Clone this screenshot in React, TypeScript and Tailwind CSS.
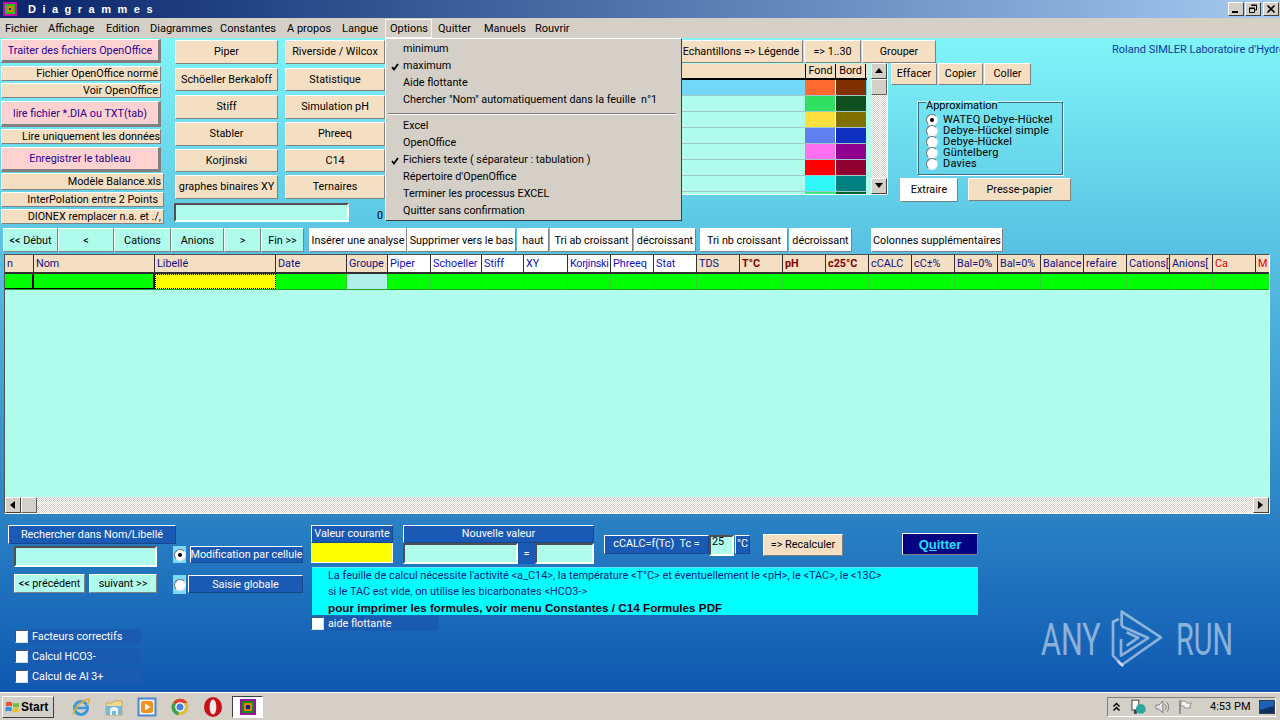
import type { ReactNode } from "react";
import clsx from "clsx";

const BEIGE = "bg-[#f5dfc3] text-black";
const MINT = "bg-[#b0fcec] text-black";
const WHITE = "bg-white text-black";
const PINK = "bg-[#ffd2d2] text-[#2a0090] border-b-[3px] border-r-[3px] pt-[2px]";
const BLUE = "bg-[#1a5ab4] text-white";
const CHECKER = "bg-[repeating-conic-gradient(#d4d0c8_0_25%,#ffffff_0_50%)] bg-[length:2px_2px]";
const ARIAL = "font-['Liberation_Sans',sans-serif]";

function Btn({ className, children }: { className?: string; children?: ReactNode }) {
  return (
    <button
      className={clsx(
        "flex shrink-0 items-center justify-center overflow-hidden whitespace-nowrap border border-t-white border-l-white border-b-[#808080] border-r-[#808080] pt-[1px] leading-none",
        className
      )}
    >
      {children}
    </button>
  );
}

function Field({ className }: { className?: string }) {
  return <div className={clsx("shrink-0 border-2 border-t-[#505050] border-l-[#505050] border-b-white border-r-white bg-[#b0fcec]", className)} />;
}

function Arrow({ dir }: { dir: "up" | "down" | "left" | "right" }) {
  const pts = { up: "4,1 0,6 8,6", down: "0,1 8,1 4,6", left: "6,0 6,8 1,4", right: "1,0 1,8 6,4" }[dir];
  return (
    <svg width="8" height="8" viewBox="0 0 8 8">
      <polygon points={pts} fill="#000" />
    </svg>
  );
}

function ScrollBtn({ dir }: { dir: "up" | "down" | "left" | "right" }) {
  return (
    <div className="flex h-[16px] w-[16px] shrink-0 items-center justify-center border border-t-white border-l-white border-b-[#404040] border-r-[#404040] bg-[#d4d0c8]">
      <Arrow dir={dir} />
    </div>
  );
}

function Radio({ on, className }: { on?: boolean; className?: string }) {
  return (
    <div className={clsx("flex h-[12px] w-[12px] shrink-0 items-center justify-center rounded-full border border-t-[#707070] border-l-[#707070] border-b-[#e8e8e8] border-r-[#e8e8e8] bg-white", className)}>
      {on && <div className="h-[4px] w-[4px] rounded-full bg-black" />}
    </div>
  );
}

function Check({ label, wide }: { label: string; wide: string }) {
  return (
    <div className={clsx("flex h-[15px] items-center", wide)}>
      <div className="h-[13px] w-[13px] shrink-0 border border-t-[#505050] border-l-[#505050] border-b-[#e0e0e0] border-r-[#e0e0e0] bg-white" />
      <div className="flex h-full flex-1 items-center bg-[#1a5ab0] pt-[2px] pl-[4px] text-[10.8px] leading-none whitespace-nowrap text-white">{label}</div>
    </div>
  );
}

function TitleBar() {
  return (
    <div className="flex h-[18px] shrink-0 items-center bg-linear-to-r from-[#0a246a] to-[#a6caf0] pl-[3px]">
      <svg width="14" height="14" viewBox="0 0 14 14" className="shrink-0">
        <rect width="14" height="14" fill="#c010a0" />
        <rect x="2" y="2" width="10" height="10" fill="#20c020" />
        <rect x="4" y="4" width="6" height="6" fill="#e08000" />
        <rect x="6" y="6" width="2" height="2" fill="#102080" />
      </svg>
      <span className={clsx("ml-[11px] text-[11px] leading-none font-bold tracking-[6.5px] whitespace-nowrap text-white", ARIAL)}>Diagrammes</span>
      <div className="ml-auto mr-[1px] flex gap-[1px]">
        {["min", "max", "close"].map((k) => (
          <div key={k} className={clsx("flex h-[14px] w-[16px] items-center justify-center border border-t-white border-l-white border-b-[#404040] border-r-[#404040] bg-[#d4d0c8]", k === "close" && "ml-[1px]")}>
            <svg width="10" height="10" viewBox="0 0 10 10">
              {k === "min" && <rect x="1" y="7" width="6" height="2" fill="#000" />}
              {k === "max" && <path d="M3.5 1.5h5v4.5h-2M3 1h6M1.5 4.5h5v4h-5zM1 4h6" fill="none" stroke="#000" />}
              {k === "close" && <path d="M1.5 1.5l7 7M8.5 1.5l-7 7" stroke="#000" strokeWidth="1.6" />}
            </svg>
          </div>
        ))}
      </div>
    </div>
  );
}

const menus = [
  { t: "Fichier", w: "w-[43px] pl-[5px]" },
  { t: "Affichage", w: "w-[58px] pl-[5px]" },
  { t: "Edition", w: "w-[44px] pl-[5px]" },
  { t: "Diagrammes", w: "w-[70px] pl-[5px]" },
  { t: "Constantes", w: "w-[67px] pl-[5px]" },
  { t: "A propos", w: "w-[55px] pl-[5px]" },
  { t: "Langue", w: "w-[48px] pl-[5px]" },
];
const menus2 = [
  { t: "Quitter", w: "w-[46px] pl-[6px]" },
  { t: "Manuels", w: "w-[51px] pl-[6px]" },
  { t: "Rouvrir", w: "w-[50px] pl-[6px]" },
];

const optionsTop = ["minimum", "maximum", "Aide flottante", 'Chercher "Nom" automatiquement dans la feuille  n°1'];
const optionsBottom = ["Excel", "OpenOffice", "Fichiers texte ( séparateur : tabulation )", "Répertoire d'OpenOffice", "Terminer les processus EXCEL", "Quitter sans confirmation"];

function OptionItem({ label, checked }: { label: string; checked: boolean }) {
  return (
    <div className="flex h-[17px] items-center whitespace-pre text-[10.8px] leading-none text-black">
      <div className="flex w-[17px] justify-center">
        {checked && (
          <svg width="8" height="8" viewBox="0 0 8 8">
            <path d="M1 4l2 2.5L7 1" fill="none" stroke="#000" strokeWidth="1.8" />
          </svg>
        )}
      </div>
      {label}
    </div>
  );
}

function MenuBar() {
  return (
    <div className="relative z-10 flex h-[20px] shrink-0 items-center bg-[#d4d0c8] pt-[1px] text-[11px] leading-none text-black">
      {menus.map((m) => (
        <div key={m.t} className={clsx("whitespace-nowrap", m.w)}>{m.t}</div>
      ))}
      <div className="flex h-[19px] w-[47px] items-center border border-[#f4f4f4] pl-[4px]">Options</div>
      {menus2.map((m) => (
        <div key={m.t} className={clsx("whitespace-nowrap", m.w)}>{m.t}</div>
      ))}
      <div className="absolute top-[20px] left-[385px] h-[183px] w-[297px] border border-t-white border-l-white border-b-[#404040] border-r-[#404040] bg-[#d4d0c8] pt-[2px]">
        {optionsTop.map((o) => (
          <OptionItem key={o} label={o} checked={o === "maximum"} />
        ))}
        <div className="mx-[2px] mt-[4px] mb-[3px] h-[2px] w-[288px] border-t border-t-[#808080] border-b border-b-white" />
        {optionsBottom.map((o) => (
          <OptionItem key={o} label={o} checked={o.startsWith("Fichiers")} />
        ))}
      </div>
    </div>
  );
}

const leftCol = [
  { t: "Traiter des fichiers OpenOffice", c: clsx(PINK, "mt-[1px] h-[24px] w-[160px]") },
  { t: "Fichier OpenOffice normé", c: clsx(BEIGE, "mt-[3px] h-[15px] w-[160px] justify-end pr-[2px]") },
  { t: "Voir OpenOffice", c: clsx(BEIGE, "mt-[2px] h-[15px] w-[160px] justify-end pr-[2px]") },
  { t: "lire fichier *.DIA ou TXT(tab)", c: clsx(PINK, "mt-[3px] h-[26px] w-[160px]") },
  { t: "Lire uniquement les données", c: clsx(BEIGE, "mt-[2px] h-[15px] w-[160px] justify-end") },
  { t: "Enregistrer le tableau", c: clsx(PINK, "mt-[3px] h-[25px] w-[160px]") },
  { t: "Modèle Balance.xls", c: clsx(BEIGE, "mt-[1px] h-[17px] w-[163px] justify-end pr-[2px]") },
  { t: "InterPolation entre 2 Points", c: clsx(BEIGE, "mt-[2px] h-[15px] w-[163px] justify-end pr-[5px]") },
  { t: "DIONEX remplacer n.a. et ./,", c: clsx(BEIGE, "mt-[2px] h-[15px] w-[163px] justify-end pr-[2px]") },
];

const diagrams = [
  { a: "Piper", b: "Riverside / Wilcox", c: "mt-[2px] h-[24px]" },
  { a: "Schöeller Berkaloff", b: "Statistique", c: "mt-[4px] h-[23px]" },
  { a: "Stiff", b: "Simulation pH", c: "mt-[4px] h-[24px]" },
  { a: "Stabler", b: "Phreeq", c: "mt-[3px] h-[24px]" },
  { a: "Korjinski", b: "C14", c: "mt-[3px] h-[23px]" },
  { a: "graphes binaires XY", b: "Ternaires", c: "mt-[3px] h-[24px]" },
];

const swatches = [
  ["bg-[#ff6a30]", "bg-[#803000]"],
  ["bg-[#30e060]", "bg-[#104f20]"],
  ["bg-[#ffe040]", "bg-[#807000]"],
  ["bg-[#6080f0]", "bg-[#1030c0]"],
  ["bg-[#ff70f0]", "bg-[#900090]"],
  ["bg-[#ff0000]", "bg-[#900030]"],
  ["bg-[#30f8f8]", "bg-[#008080]"],
];

const approximations = ["WATEQ Debye-Hückel", "Debye-Hückel simple", "Debye-Hückel", "Güntelberg", "Davies"];

function ColorTable() {
  return (
    <div className="flex h-[132px] w-[503px] shrink-0 overflow-hidden border-r border-b border-white bg-[#b0fcec]">
      <div className="flex w-[482px] shrink-0 flex-col pt-[1px]">
        <div className="flex h-[16px] shrink-0 border-b-2 border-black bg-[#f5dfc3] pl-[420px] leading-none">
          <div className="flex w-[31px] items-center justify-center border-x border-black">Fond</div>
          <div className="flex w-[30px] items-center justify-center border-r border-black">Bord</div>
        </div>
        {swatches.map(([fond, bord], i) => (
          <div key={fond} className={clsx("flex h-[16px] shrink-0 border-b border-[#a0c8c8] pl-[420px]", i === 0 ? "bg-[#73d8f8]" : "bg-[#b0fcec]")}>
            <div className={clsx("w-[31px] border-r border-white", fond)} />
            <div className={clsx("w-[30px]", bord)} />
          </div>
        ))}
        <div className="flex h-[2px] shrink-0 pl-[420px]">
          <div className="w-[31px] bg-[#40e880]" />
          <div className="w-[30px] bg-[#006030]" />
        </div>
      </div>
      <div className={clsx("ml-[4px] flex w-[16px] shrink-0 flex-col", CHECKER)}>
        <ScrollBtn dir="up" />
        <div className="h-[16px] w-[16px] border border-t-white border-l-white border-b-[#606060] border-r-[#606060] bg-[#d4d0c8]" />
        <div className="flex-1" />
        <ScrollBtn dir="down" />
      </div>
    </div>
  );
}

function TopPanel() {
  return (
    <div className="flex h-[188px] shrink-0 text-[10.8px]">
      <div className="ml-[1px] flex w-[173px] shrink-0 flex-col">
        {leftCol.map((b) => (
          <Btn key={b.t} className={b.c}>{b.t}</Btn>
        ))}
      </div>
      <div className="flex w-[211px] shrink-0 flex-col">
        {diagrams.map((d) => (
          <div key={d.a} className={clsx("flex pl-[1px]", d.c)}>
            <Btn className={clsx(BEIGE, "w-[103px]")}>{d.a}</Btn>
            <Btn className={clsx(BEIGE, "ml-[7px] w-[100px]")}>{d.b}</Btn>
          </div>
        ))}
        <div className="mt-[4px] flex items-end">
          <Field className="h-[19px] w-[175px]" />
          <span className="ml-[28px] leading-none">0</span>
        </div>
      </div>
      <div className="flex w-[695px] shrink-0 flex-col">
        <div className="mt-[2px] flex h-[23px] w-[551px] shrink-0 justify-end">
          <Btn className={clsx(BEIGE, "w-[124px]")}>Echantillons =&gt; Légende</Btn>
          <Btn className={clsx(BEIGE, "ml-[1px] w-[57px]")}>=&gt; 1..30</Btn>
          <Btn className={clsx(BEIGE, "ml-[1px] w-[74px]")}>Grouper</Btn>
        </div>
        <div className="flex">
          <ColorTable />
          <div className="ml-[3px] flex flex-col">
            <div className="flex h-[22px]">
              <Btn className={clsx(BEIGE, "w-[46px]")}>Effacer</Btn>
              <Btn className={clsx(BEIGE, "ml-[1px] w-[45px]")}>Copier</Btn>
              <Btn className={clsx(BEIGE, "ml-[1px] w-[47px]")}>Coller</Btn>
            </div>
            <fieldset className="mt-[12px] ml-[27px] h-[78px] w-[145px] border border-[#3a6a80] pl-[7px] text-[11px] tracking-[0.2px] shadow-[1px_1px_0_#ffffff,-1px_-1px_0_#d8f8f8]">
              <legend className="relative top-[3px] text-[11px] leading-none tracking-normal">Approximation</legend>
              <div className="mt-[6px]">
                {approximations.map((a, i) => (
                  <div key={a} className="flex h-[11px] items-center whitespace-nowrap leading-[11px]">
                    <Radio on={i === 0} />
                    <span className="ml-[5px]">{a}</span>
                  </div>
                ))}
              </div>
            </fieldset>
            <div className="mt-[3px] ml-[9px] flex">
              <Btn className={clsx(WHITE, "h-[24px] w-[58px]")}>Extraire</Btn>
              <Btn className={clsx(BEIGE, "ml-[10px] h-[23px] w-[103px]")}>Presse-papier</Btn>
            </div>
          </div>
        </div>
      </div>
      <div className="ml-[32px] mt-[6px] whitespace-nowrap text-[11px] leading-none text-[#0a3aa0]">Roland SIMLER Laboratoire d'Hydrogéologie</div>
    </div>
  );
}

const navButtons = [
  { t: "<< Début", c: clsx(MINT, "w-[55px]") },
  { t: "<", c: clsx(MINT, "w-[56px]") },
  { t: "Cations", c: clsx(MINT, "w-[57px]") },
  { t: "Anions", c: clsx(MINT, "w-[53px]") },
  { t: ">", c: clsx(MINT, "w-[37px]") },
  { t: "Fin >>", c: clsx(MINT, "w-[43px]") },
  { t: "Insérer une analyse", c: clsx(WHITE, "ml-[5px] w-[98px]") },
  { t: "Supprimer vers le bas", c: clsx(WHITE, "w-[109px]") },
  { t: "haut", c: clsx(WHITE, "ml-[1px] w-[32px]") },
  { t: "Tri ab croissant", c: clsx(WHITE, "ml-[1px] w-[83px]") },
  { t: "décroissant", c: clsx(WHITE, "ml-[1px] w-[62px]") },
  { t: "Tri nb croissant", c: clsx(WHITE, "ml-[4px] w-[88px]") },
  { t: "décroissant", c: clsx(WHITE, "ml-[1px] w-[63px]") },
  { t: "Colonnes supplémentaires", c: clsx(WHITE, "ml-[19px] w-[132px]") },
];

const COLS = "grid grid-cols-[29px_121px_121px_71px_41px_43px_51px_42px_44px_43px_43px_43px_43px_43px_43px_43px_43px_43px_43px_43px_43px_43px_43px_43px_43px_15px]";
const HB = "bg-[#f5dfc3] text-[#101080]";
const HW = "bg-white text-[#1010c0]";
const HM = "bg-[#f5dfc3] text-[#800000] font-bold";
const HR = "bg-[#f5dfc3] text-[#e00000]";

const headers = [
  { t: "n", c: HB },
  { t: "Nom", c: HB },
  { t: "Libellé", c: HB },
  { t: "Date", c: HB },
  { t: "Groupe", c: HB },
  { t: "Piper", c: HW },
  { t: "Schoeller", c: HW },
  { t: "Stiff", c: HW },
  { t: "XY", c: HW },
  { t: "Korjinski", c: clsx(HW, "tracking-[-0.3px]") },
  { t: "Phreeq", c: HW },
  { t: "Stat", c: HW },
  { t: "TDS", c: HB },
  { t: "T°C", c: HM },
  { t: "pH", c: HM },
  { t: "c25°C", c: HM },
  { t: "cCALC", c: HB },
  { t: "cC±%", c: HB },
  { t: "Bal=0%", c: HB },
  { t: "Bal=0%", c: HB },
  { t: "Balance", c: HB },
  { t: "refaire", c: HB },
  { t: "Cations[", c: HB },
  { t: "Anions[", c: HB },
  { t: "Ca", c: HR },
  { t: "M", c: HR },
];

function DataGrid() {
  return (
    <div className="mt-[2px] ml-[4px] flex h-[260px] w-[1266px] shrink-0 flex-col overflow-hidden border-t border-l border-t-[#505050] border-l-[#505050] border-b border-r border-b-white border-r-white bg-[#b0fcec]">
      <div className={clsx(COLS, "h-[19px] shrink-0 border-b-2 border-[#303030]")}>
        {headers.map((h, i) => (
          <div key={i} className={clsx("flex items-center overflow-hidden border-r border-[#303030] pt-[1px] pl-[2px] text-[10.8px] leading-none whitespace-nowrap", h.c)}>
            {h.t}
          </div>
        ))}
      </div>
      <div className={clsx(COLS, "h-[16px] shrink-0 border-b border-[#20a020]")}>
        {headers.map((h, i) => (
          <div
            key={i}
            className={clsx(
              i === 2 ? "border border-dotted border-black bg-[#ffff00]" : i === 4 ? "bg-[#b0f0e8]" : "bg-[#00ff00]",
              i < 2 ? "border-r-2 border-b border-black" : i !== 2 && "border-r border-[#30d030]"
            )}
          />
        ))}
      </div>
      <div className="flex-1" />
      <div className={clsx("flex h-[16px] shrink-0", CHECKER)}>
        <ScrollBtn dir="left" />
        <div className="h-[16px] w-[16px] border border-t-white border-l-white border-b-[#606060] border-r-[#606060] bg-[#d4d0c8]" />
        <div className="flex-1" />
        <ScrollBtn dir="right" />
      </div>
    </div>
  );
}

function Label({ className, children }: { className?: string; children: ReactNode }) {
  return (
    <div className={clsx("flex shrink-0 items-center justify-center border border-t-white border-l-white border-b-[#16488c] border-r-[#16488c] text-[10.8px] leading-none whitespace-nowrap", className)}>
      {children}
    </div>
  );
}

function BottomPanel() {
  return (
    <div className="flex flex-1">
      <div className="ml-[8px] flex w-[165px] shrink-0 flex-col pt-[11px]">
        <Label className={clsx(BLUE, "h-[19px] w-[168px] pt-[1px]")}>Rechercher dans Nom/Libellé</Label>
        <Field className="mt-[2px] ml-[6px] h-[21px] w-[143px]" />
        <div className="mt-[7px] ml-[6px] flex text-[10.8px]">
          <Btn className={clsx(MINT, "h-[19px] w-[71px]")}>&lt;&lt; précédent</Btn>
          <Btn className={clsx(MINT, "ml-[4px] h-[19px] w-[68px]")}>suivant &gt;&gt;</Btn>
        </div>
        <div className="mt-[36px] ml-[7px] flex flex-col gap-[5px]">
          <Check label="Facteurs correctifs" wide="w-[126px]" />
          <Check label="Calcul HCO3-" wide="w-[126px]" />
          <Check label="Calcul de Al 3+" wide="w-[126px]" />
        </div>
      </div>
      <div className="flex w-[130px] shrink-0 flex-col pt-[32px]">
        <div className="flex h-[17px]">
          <div className="flex w-[13px] items-center justify-center bg-[#80d8f8]"><Radio on /></div>
          <Label className={clsx(BLUE, "ml-[4px] h-[17px] w-[113px] pt-[1px]")}>Modification par cellule</Label>
        </div>
        <div className="mt-[12px] flex h-[19px]">
          <div className="flex w-[13px] items-center justify-center bg-[#80d8f8]"><Radio /></div>
          <Label className={clsx(BLUE, "ml-[2px] h-[18px] w-[115px] pt-[2px]")}>Saisie globale</Label>
        </div>
      </div>
      <div className="ml-[8px] flex flex-col pt-[11px]">
        <div className="flex h-[39px]">
          <div className="flex w-[82px] flex-col">
            <Label className={clsx(BLUE, "h-[18px]")}>Valeur courante</Label>
            <div className="h-[20px] border-r border-b border-white bg-[#ffff00]" />
          </div>
          <div className="ml-[10px] flex w-[191px] flex-col">
            <Label className={clsx(BLUE, "h-[18px]")}>Nouvelle valeur</Label>
            <div className="flex h-[21px]">
              <Field className="w-[115px]" />
              <div className="flex w-[17px] items-center justify-center bg-[#1a5ab4] text-[11px] leading-none text-white">=</div>
              <Field className="w-[59px]" />
            </div>
          </div>
          <div className="mt-[10px] ml-[10px] flex h-[19px] w-[146px]">
            <Label className={clsx(BLUE, "w-[105px]")}>cCALC=f(Tc)&nbsp;&nbsp;Tc =</Label>
            <div className="flex h-[21px] w-[25px] items-start border-2 border-t-[#505050] border-l-[#505050] border-b-white border-r-white bg-[#b0fcec] pl-[1px] text-[10.8px] leading-none">25</div>
            <Label className={clsx(BLUE, "ml-[1px] w-[15px]")}>°C</Label>
          </div>
          <Btn className={clsx(BEIGE, "mt-[9px] ml-[13px] h-[22px] w-[80px] text-[10.8px]")}>=&gt; Recalculer</Btn>
          <Btn className={clsx("mt-[8px] ml-[59px] h-[22px] w-[76px] bg-[#000080] text-[13px] font-bold text-[#20e0ff]", ARIAL)}>
            <span>Q<span className="underline">u</span>itter</span>
          </Btn>
        </div>
        <div className="mt-[3px] ml-[1px] flex h-[48px] w-[666px] flex-col justify-center gap-[3px] border-t border-t-[#60e8ff] bg-[#00ffff] pl-[16px] text-[10.9px] leading-[13px] whitespace-nowrap text-[#102080]">
          <div>{"La feuille de calcul nécessite l'activité <a_C14>, la température <T°C> et éventuellement le <pH>, le <TAC>, le <13C>"}</div>
          <div>{"si le TAC est vide, on utilise les bicarbonates <HCO3->"}</div>
          <div className={clsx("text-[11.7px] font-bold text-[#200010]", ARIAL)}>pour imprimer les formules, voir menu Constantes / C14 Formules PDF</div>
        </div>
        <div className="mt-[1px]">
          <Check label="aide flottante" wide="w-[127px]" />
        </div>
      </div>
    </div>
  );
}

function Watermark() {
  return (
    <div className="absolute top-[609px] left-[1041px] flex h-[60px] items-center text-white/50">
      <span className="inline-block w-[60px] origin-left scale-x-[0.68] text-[45px] leading-none font-normal">ANY</span>
      <svg width="55" height="60" viewBox="235 10 165 180" className="ml-[9px] shrink-0" fill="none" stroke="currentColor" strokeWidth="8" strokeLinejoin="round">
        <path d="M262 40 L244 48 V150 L275 182" />
        <path d="M270 62 V18 L388 95 L270 178 L258 166" />
        <path d="M270 62 L350 97 L268 150 L268 100" />
        <path d="M285 120 L320 96 L285 80" />
      </svg>
      <span className="ml-[11px] inline-block w-[54px] origin-left scale-x-[0.64] text-[45px] leading-none font-normal">RUN</span>
    </div>
  );
}

function TaskIcons() {
  return (
    <div className="ml-[17px] flex items-center gap-[13px]">
      <svg width="20" height="20" viewBox="0 0 20 20">
        <circle cx="10" cy="11" r="6.5" fill="none" stroke="#3a9ad8" strokeWidth="3" />
        <path d="M3 11h14" stroke="#3a9ad8" strokeWidth="2.5" />
        <path d="M3 18C1 14 9 4 18 2c1 3-1 5-2 6" fill="none" stroke="#e8b030" strokeWidth="1.5" />
      </svg>
      <svg width="20" height="20" viewBox="0 0 20 20">
        <path d="M2 6h6l2-2h8v14H2z" fill="#f0d890" stroke="#c8a858" />
        <rect x="2" y="9" width="16" height="9" fill="#78b8d8" />
        <path d="M6 18v-5a4 3 0 0 1 8 0v5h-2v-4h-4v4z" fill="#f0f6f8" />
      </svg>
      <svg width="20" height="20" viewBox="0 0 20 20">
        <rect x="1.5" y="1.5" width="17" height="17" fill="#e8f0f8" stroke="#5088c8" strokeWidth="2" />
        <rect x="4" y="4" width="12" height="12" rx="3" fill="#f09020" />
        <path d="M8 6.5v7l5.5-3.5z" fill="#fff" />
      </svg>
      <svg width="20" height="20" viewBox="0 0 20 20">
        <circle cx="10" cy="10" r="8.5" fill="#d8c040" />
        <path d="M10 10L3 5.5A8.5 8.5 0 0 1 17.5 6H10z" fill="#d84030" />
        <path d="M10 10L3 5.5A8.5 8.5 0 0 0 8 18.5z" fill="#40a050" />
        <circle cx="10" cy="10" r="4.2" fill="#4a80d8" stroke="#fff" strokeWidth="1.3" />
      </svg>
      <svg width="20" height="22" viewBox="0 0 20 22">
        <ellipse cx="10" cy="11" rx="9" ry="10" fill="#c81018" />
        <ellipse cx="10" cy="11" rx="3.4" ry="7.5" fill="#f4e8e8" />
      </svg>
    </div>
  );
}

function Tray() {
  return (
    <div className="mr-[4px] ml-auto flex h-[20px] w-[169px] items-center border border-t-[#808080] border-l-[#808080] border-b-white border-r-white pl-[4px]">
      <svg width="18" height="12" viewBox="0 0 18 12" className="shrink-0">
        <path d="M1.5 5.5L4.5 2.5 7.5 5.5M1.5 9.5L4.5 6.5 7.5 9.5" fill="none" stroke="#000" strokeWidth="1.5" />
      </svg>
      <svg width="18" height="16" viewBox="0 0 18 16">
        <rect x="2" y="1" width="7" height="10" fill="#fff" stroke="#404040" />
        <rect x="4" y="11" width="3" height="4" fill="#404040" />
        <circle cx="11" cy="10" r="5" fill="#30a8a0" />
      </svg>
      <svg width="16" height="16" viewBox="0 0 16 16" className="ml-[6px]">
        <path d="M2 6h3l4-4v12l-4-4H2z" fill="#e8e8e8" stroke="#808080" />
        <path d="M11 5a4 4 0 0 1 0 6M13 3a7 7 0 0 1 0 10" fill="none" stroke="#808080" />
      </svg>
      <svg width="16" height="16" viewBox="0 0 16 16" className="ml-[8px]">
        <path d="M3 1v14" stroke="#707070" strokeWidth="1.4" />
        <path d="M4 2h5l1 2h5l-2 3 1 2H8L7 7H4z" fill="#f4f4f4" stroke="#909090" />
      </svg>
      <span className="ml-[17px] w-[50px] text-[11px] leading-none whitespace-nowrap text-black">4:53 PM</span>
      <svg width="16" height="14" viewBox="0 0 16 14" className="shrink-0">
        <rect x="0.5" y="0.5" width="15" height="13" fill="#2060b0" stroke="#304060" />
        <path d="M1 10l14-4v7H1z" fill="#103060" />
      </svg>
    </div>
  );
}

function Taskbar() {
  return (
    <div className="flex h-[28px] shrink-0 items-center border-t border-white bg-[#d4d0c8] pl-[2px]">
      <button className={clsx("flex h-[22px] w-[52px] items-center border border-t-white border-l-white border-b-[#404040] border-r-[#404040] pl-[2px] text-[12px] leading-none font-bold text-black", ARIAL)}>
        <svg width="15" height="14" viewBox="0 0 15 14" className="mr-[1px] shrink-0">
          <path d="M1 2.5c2-1 4-1 6 0v4c-2-1-4-1-6 0z" fill="#e8502a" />
          <path d="M8 2.8c2 1 4 1 6 0v4c-2 1-4 1-6 0z" fill="#6cbe3c" />
          <path d="M0.5 7.5c2-1 4-1 6 0v4c-2-1-4-1-6 0z" fill="#3090e0" />
          <path d="M7.5 7.8c2 1 4 1 6 0v4c-2 1-4 1-6 0z" fill="#f0c020" />
        </svg>
        Start
      </button>
      <TaskIcons />
      <div className="ml-[9px] flex h-[22px] w-[31px] items-center justify-center border border-t-[#404040] border-l-[#404040] border-b-white border-r-white bg-white">
        <svg width="16" height="16" viewBox="0 0 16 16">
          <rect width="16" height="16" fill="#a010a0" />
          <rect x="2" y="2" width="12" height="12" fill="#109010" />
          <rect x="4" y="4" width="8" height="8" fill="#e08000" />
          <rect x="6" y="6" width="4" height="4" fill="#102080" />
        </svg>
      </div>
      <Tray />
    </div>
  );
}

export default function App() {
  return (
    <div className="relative flex h-[720px] w-[1280px] flex-col overflow-hidden font-['Roboto',sans-serif] text-black">
      <TitleBar />
      <MenuBar />
      <div className="flex flex-1 flex-col overflow-hidden bg-linear-to-b from-[#80f5f8] to-[#0f58b0]">
        <TopPanel />
        <div className="mt-[2px] ml-[3px] flex h-[24px] shrink-0 pt-0 text-[10.8px] [&>button]:pt-[3px]">
          {navButtons.map((b, i) => (
            <Btn key={i} className={b.c}>{b.t}</Btn>
          ))}
        </div>
        <DataGrid />
        <BottomPanel />
      </div>
      <Watermark />
      <Taskbar />
    </div>
  );
}
